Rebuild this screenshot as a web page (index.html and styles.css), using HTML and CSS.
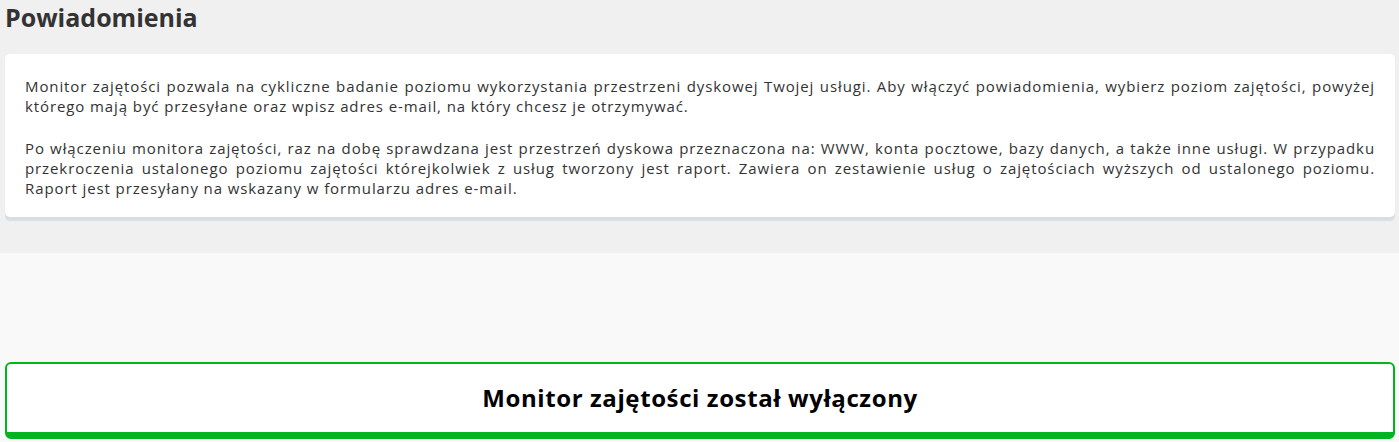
FILE: index.html
```html
<!DOCTYPE html>
<html lang="pl">
<head>
    <meta charset="utf-8">
    <link rel="stylesheet" href="styles.css">
</head>
<body>
<!-- sekcja z opisem powiadomien -->
<div class="top">
    <h2 class="title">Powiadomienia</h2>
    <div class="card">
        <p>Monitor zajętości pozwala na cykliczne badanie poziomu wykorzystania przestrzeni dyskowej Twojej usługi. Aby włączyć powiadomienia, wybierz poziom zajętości, powyżej którego mają być przesyłane oraz wpisz adres e-mail, na który chcesz je otrzymywać.</p>
        <p>Po włączeniu monitora zajętości, raz na dobę sprawdzana jest przestrzeń dyskowa przeznaczona na: WWW, konta pocztowe, bazy danych, a także inne usługi. W przypadku przekroczenia ustalonego poziomu zajętości którejkolwiek z usług tworzony jest raport. Zawiera on zestawienie usług o zajętościach wyższych od ustalonego poziomu. Raport jest przesyłany na wskazany w formularzu adres e-mail.</p>
    </div>
</div>
<!-- status monitora -->
<div class="bottom">
    <div class="status">Monitor zajętości został wyłączony</div>
</div>
</body>
</html>
```

FILE: styles.css
```css
*{margin: 0;padding: 0;box-sizing: border-box;}
body{font-family: "Open Sans", "Liberation Sans", sans-serif; color: #333; background: #f9f9f9;}
/*gorna szara sekcja*/
.top{background: #f0f0f0; padding: 0 4px 0 5px; height: 253px;}
.title{font-size: 25px; font-weight: 700; line-height: 34px; color: #333;}
.card{background: #fff; margin-top: 20px; border-radius: 5px; box-shadow: 0 4px 1px #d8dde1; padding: 22px 20px 19px 20px;}
.card p{font-size: 15px; line-height: 20px; letter-spacing: 0.9px; text-align: justify;}
.card p + p{margin-top: 22px;}
/*dolna sekcja ze statusem*/
.bottom{padding: 109px 4px 0 5px;}
.status{height: 77px; border: 2px solid #00b520; border-bottom-width: 7px; border-radius: 6px; background: #fff; color: #000; font-size: 24px; font-weight: 700; letter-spacing: 0.6px; text-align: center; line-height: 68px;}
```
